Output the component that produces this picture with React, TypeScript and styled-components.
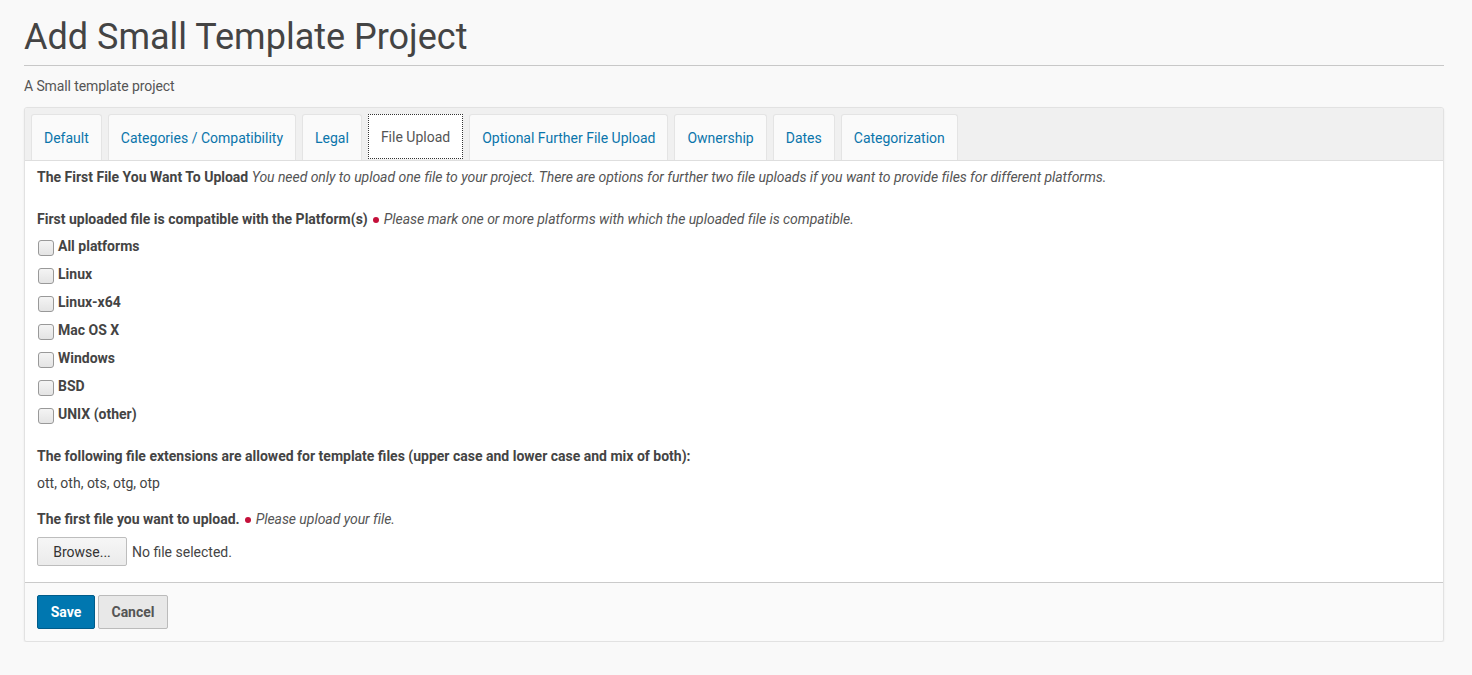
import styled, { createGlobalStyle } from "styled-components";

const GlobalStyle = createGlobalStyle`
    html, body {
        margin: 0;
        padding: 0;
        background: #f9f9f9;
        font-family: Roboto, "Noto Sans", sans-serif;
        color: #444;
    }
`;

const Page = styled.div`
    padding: 0 28px 0 24px;
`;

const Title = styled.h1`
    margin: 0;
    padding-top: 15px;
    font-size: 36px;
    font-weight: 400;
    line-height: 44px;
    color: #444;
    padding-bottom: 6px;
    border-bottom: 1px solid #c8c8c8;
`;

const Subtitle = styled.p`
    margin: 0;
    padding: 12px 0 13px;
    font-size: 14px;
    line-height: 16px;
    color: #555;
    letter-spacing: -0.1px;
`;

const Panel = styled.div`
    background: #fafafa;
    border: 1px solid #e2e2e2;
    border-radius: 3px;
    box-shadow: 0 1px 2px rgba(0, 0, 0, 0.08);
    overflow: hidden;
`;

const TabBar = styled.ul`
    display: flex;
    gap: 6px;
    margin: 0;
    padding: 6px 6px 0;
    list-style: none;
    background: #f0f0f0;
    border-bottom: 1px solid #dedede;
`;

const Tab = styled.li<{ $active?: boolean }>`
    display: flex;
    align-items: center;
    padding: 0 12px;
    font-size: 14px;
    color: ${(p) => (p.$active ? "#555" : "#0a75ab")};
    background: ${(p) => (p.$active ? "#fff" : "#fafafa")};
    border: 1px ${(p) => (p.$active ? "dotted #333" : "solid #e4e4e4")};
    border-bottom: ${(p) => (p.$active ? "1px dotted #333" : "none")};
    border-radius: ${(p) => (p.$active ? "0" : "3px 3px 0 0")};
    margin-bottom: ${(p) => (p.$active ? "1px" : "0")};
    height: ${(p) => (p.$active ? "43px" : "45px")};
`;

const Content = styled.div`
    background: #fff;
    padding: 7px 12px 16px;
    border-bottom: 1px solid #cacaca;
    font-size: 14px;
`;

const Line = styled.div<{ $gap?: number }>`
    line-height: 18px;
    margin-top: ${(p) => p.$gap ?? 0}px;
    color: #444;
`;

const Strong = styled.b`
    font-weight: 700;
    color: #444;
`;

const Hint = styled.i`
    color: #555;
    letter-spacing: -0.05px;
`;

const Required = styled.span`
    display: inline-block;
    width: 6px;
    height: 6px;
    border-radius: 50%;
    background: #c4103a;
    margin: 0 5px 1px 5px;
    vertical-align: middle;
`;

const CheckList = styled.div`
    display: flex;
    flex-direction: column;
    gap: 10px;
    margin-top: 9px;
`;

const CheckRow = styled.label`
    display: flex;
    align-items: center;
    gap: 4px;
    height: 18px;
    font-weight: 700;
    color: #444;
`;

const Box = styled.input`
    appearance: none;
    margin: 4px 0 0 1px;
    width: 16px;
    height: 16px;
    border: 1px solid #999;
    border-radius: 3px;
    background: linear-gradient(#f4f4f4, #e4e4e4);
`;

const Extensions = styled.div`
    margin-top: 9px;
    line-height: 18px;
    color: #444;
`;

const FileRow = styled.div`
    display: flex;
    align-items: center;
    gap: 5px;
    margin-top: 9px;
    color: #444;
`;

const BrowseButton = styled.button`
    height: 29px;
    width: 90px;
    padding: 0;
    font-family: inherit;
    font-size: 14px;
    color: #333;
    background: linear-gradient(#f6f6f6, #ebebeb);
    border: 1px solid #bdbdbd;
    border-radius: 2px;
`;

const Footer = styled.div`
    display: flex;
    gap: 3px;
    padding: 12px 12px 12px;
    background: #fafafa;
`;

const Button = styled.button<{ $primary?: boolean }>`
    height: 34px;
    width: ${(p) => (p.$primary ? "58px" : "70px")};
    padding: 0;
    font-family: inherit;
    font-size: 14px;
    font-weight: 700;
    color: ${(p) => (p.$primary ? "#fff" : "#555")};
    background: ${(p) => (p.$primary ? "#0077b0" : "#e8e8e8")};
    border: 1px solid ${(p) => (p.$primary ? "#005c8a" : "#bbb")};
    border-radius: 2px;
`;

const tabs = [
    "Default",
    "Categories / Compatibility",
    "Legal",
    "File Upload",
    "Optional Further File Upload",
    "Ownership",
    "Dates",
    "Categorization",
];

const platforms = ["All platforms", "Linux", "Linux-x64", "Mac OS X", "Windows", "BSD", "UNIX (other)"];

const App = () => {
    return (
        <>
            <GlobalStyle />
            <Page>
                <Title>Add Small Template Project</Title>
                <Subtitle>A Small template project</Subtitle>
                <Panel>
                    <TabBar>
                        {tabs.map((t) => (
                            <Tab key={t} $active={t === "File Upload"}>
                                {t}
                            </Tab>
                        ))}
                    </TabBar>
                    <Content>
                        <Line>
                            <Strong>The First File You Want To Upload</Strong>{" "}
                            <Hint>
                                You need only to upload one file to your project. There are options for further two
                                file uploads if you want to provide files for different platforms.
                            </Hint>
                        </Line>
                        <Line $gap={24}>
                            <Strong>First uploaded file is compatible with the Platform(s)</Strong>
                            <Required />
                            <Hint>Please mark one or more platforms with which the uploaded file is compatible.</Hint>
                        </Line>
                        <CheckList>
                            {platforms.map((p) => (
                                <CheckRow key={p}>
                                    <Box type="checkbox" />
                                    {p}
                                </CheckRow>
                            ))}
                        </CheckList>
                        <Line $gap={24}>
                            <Strong>
                                The following file extensions are allowed for template files (upper case and lower
                                case and mix of both):
                            </Strong>
                        </Line>
                        <Extensions>ott, oth, ots, otg, otp</Extensions>
                        <Line $gap={18}>
                            <Strong>The first file you want to upload.</Strong>
                            <Required />
                            <Hint>Please upload your file.</Hint>
                        </Line>
                        <FileRow>
                            <BrowseButton>Browse...</BrowseButton>
                            No file selected.
                        </FileRow>
                    </Content>
                    <Footer>
                        <Button $primary>Save</Button>
                        <Button>Cancel</Button>
                    </Footer>
                </Panel>
            </Page>
        </>
    );
};

export default App;
